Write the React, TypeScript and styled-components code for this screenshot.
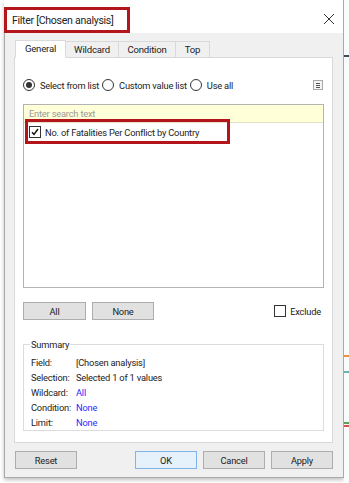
import React from "react";
import styled, { createGlobalStyle } from "styled-components";

const Global = createGlobalStyle`
  html, body { margin: 0; padding: 0; background: #ffffff; }
  body { font-family: Roboto, "Open Sans", sans-serif; color: #222; letter-spacing: -0.2px; }
  * { box-sizing: border-box; }
`;

const Page = styled.div`
  width: 349px;
  height: 483px;
  display: flex;
  overflow: hidden;
  background: #ffffff;
`;

const Dialog = styled.div`
  margin-left: 4px;
  width: 340px;
  height: 478px;
  display: flex;
  flex-direction: column;
  border: 1px solid #a9a9a9;
  border-top: none;
  background: #f0f0f0;
  box-shadow: 0 2px 4px rgba(0, 0, 0, 0.25);
`;

const TitleBar = styled.div`
  height: 33px;
  background: #ffffff;
  display: flex;
  align-items: flex-start;
  justify-content: space-between;
  padding-top: 7px;
  margin-left: -1px;
`;

const TitleBox = styled.div`
  width: 126px;
  height: 26px;
  border: 3px solid #b3151a;
  display: flex;
  align-items: center;
  padding-left: 5px;
  font-size: 10.6px;
  letter-spacing: -0.3px;
  color: #222;
  white-space: nowrap;
`;

const CloseBtn = styled.div`
  width: 14px;
  height: 14px;
  margin: 5px 7px 0 0;
  display: flex;
  align-items: center;
  justify-content: center;
`;

const Body = styled.div`
  flex: 1;
  display: flex;
  flex-direction: column;
  padding: 7px 10px 0 9px;
`;

const TabRow = styled.div`
  display: flex;
  align-items: flex-end;
  height: 17px;
  padding-left: 1px;
  position: relative;
  z-index: 1;
`;

const Tab = styled.div<{ $active?: boolean; $w: number }>`
  width: ${(p) => p.$w}px;
  height: ${(p) => (p.$active ? 18 : 16)}px;
  display: flex;
  align-items: center;
  justify-content: center;
  font-size: 9.6px;
  color: #222;
  background: ${(p) => (p.$active ? "#ffffff" : "#f0f0f0")};
  border: 1px solid #d9d9d9;
  border-bottom: ${(p) => (p.$active ? "1px solid #ffffff" : "none")};
  margin-left: ${(p) => (p.$active ? 0 : -1)}px;
  margin-bottom: ${(p) => (p.$active ? -1 : 0)}px;
  padding-bottom: ${(p) => (p.$active ? 1 : 0)}px;
`;

const Panel = styled.div`
  height: 386px;
  background: #ffffff;
  border: 1px solid #d9d9d9;
  padding: 0 8px 0 8px;
  display: flex;
  flex-direction: column;
`;

const RadioRow = styled.div`
  height: 18px;
  margin-top: 18px;
  display: flex;
  align-items: center;
  font-size: 9.3px;
  color: #222;
`;

const RadioItem = styled.label`
  display: flex;
  align-items: center;
  gap: 5px;
  margin-right: 3px;
`;

const Radio = styled.span<{ $on?: boolean }>`
  width: 12px;
  height: 12px;
  border-radius: 50%;
  border: 1px solid #333;
  background: #fff;
  display: flex;
  align-items: center;
  justify-content: center;
  &::after {
    content: "";
    width: 6px;
    height: 6px;
    border-radius: 50%;
    background: ${(p) => (p.$on ? "#333" : "transparent")};
  }
`;

const Spacer = styled.div`
  flex: 1;
`;

const MenuIcon = styled.div`
  width: 10px;
  height: 10px;
  border: 1px solid #a8a8a8;
  background: #f4f4f4;
  display: flex;
  flex-direction: column;
  justify-content: center;
  gap: 1px;
  padding: 0 2px;
  margin-right: 1px;
  & > span {
    height: 1px;
    background: #555;
  }
`;

const ListBox = styled.div`
  margin-top: 10px;
  height: 184px;
  border: 1px solid #b4b4b4;
  display: flex;
  flex-direction: column;
`;

const Search = styled.div`
  height: 18px;
  background: #ffffd8;
  border-bottom: 1px solid #e2e2c8;
  display: flex;
  align-items: center;
  padding-left: 5px;
  font-size: 9.3px;
  color: #9a9a9a;
`;

const ItemRow = styled.div`
  height: 18px;
  display: flex;
  align-items: center;
  padding-left: 5px;
  font-size: 9.3px;
  color: #222;
  position: relative;
`;

const Highlight = styled.div`
  position: absolute;
  left: 1px;
  top: -4px;
  width: 205px;
  height: 25px;
  border: 3px solid #b3151a;
`;

const Check = styled.span`
  width: 12px;
  height: 12px;
  border: 1px solid #333;
  background: #fff;
  display: inline-flex;
  align-items: center;
  justify-content: center;
  margin-right: 4px;
`;

const BtnRow = styled.div`
  margin-top: 14px;
  height: 18px;
  display: flex;
  align-items: center;
  gap: 6px;
`;

const Button = styled.div<{ $w: number; $primary?: boolean }>`
  width: ${(p) => p.$w}px;
  height: 18px;
  display: flex;
  align-items: center;
  justify-content: center;
  font-size: 9.3px;
  color: #222;
  background: ${(p) => (p.$primary ? "#e5f1fb" : "#e1e1e1")};
  border: 1px solid ${(p) => (p.$primary ? "#7eb4ea" : "#adadad")};
`;

const CheckLabel = styled.label`
  display: flex;
  align-items: center;
  gap: 4px;
  font-size: 9.3px;
  color: #222;
  margin-right: 3px;
`;

const EmptyBox = styled.span`
  width: 12px;
  height: 12px;
  border: 1px solid #333;
  background: #fff;
`;

const Fieldset = styled.fieldset`
  margin: 19px 0 0 0;
  padding: 5px 7px 4px 7px;
  border: 1px solid #dcdcdc;
  height: 92px;
  display: flex;
  flex-direction: column;
`;

const Legend = styled.legend`
  font-size: 9.3px;
  color: #222;
  padding: 0 1px;
  margin-left: -1px;
`;

const SummaryGrid = styled.div`
  display: grid;
  grid-template-columns: 45px 1fr;
  row-gap: 0;
  grid-auto-rows: 15px;
  font-size: 9.3px;
  align-items: center;
`;

const Key = styled.span`
  color: #222;
`;

const Val = styled.span<{ $link?: boolean }>`
  color: ${(p) => (p.$link ? "#2a2aff" : "#222")};
`;

const Footer = styled.div`
  height: 34px;
  display: flex;
  align-items: center;
  gap: 6px;
  margin-left: 1px;
`;

const Side = styled.div`
  flex: 1;
  display: flex;
  flex-direction: column;
  background: #fbfbfb;
`;

const SideMark = styled.div<{ $c: string; $t: number }>`
  height: 2px;
  margin-top: ${(p) => p.$t}px;
  background: ${(p) => p.$c};
`;

export default function App() {
  return (
    <Page>
      <Global />
      <Dialog>
        <TitleBar>
          <TitleBox>Filter [Chosen analysis]</TitleBox>
          <CloseBtn>
            <svg width="12" height="12" viewBox="0 0 12 12">
              <path d="M1 1L11 11M11 1L1 11" stroke="#333" strokeWidth="1" />
            </svg>
          </CloseBtn>
        </TitleBar>
        <Body>
          <TabRow>
            <Tab $active $w={51}>General</Tab>
            <Tab $w={54}>Wildcard</Tab>
            <Tab $w={58}>Condition</Tab>
            <Tab $w={35}>Top</Tab>
          </TabRow>
          <Panel>
            <RadioRow>
              <RadioItem>
                <Radio $on />
                Select from list
              </RadioItem>
              <RadioItem>
                <Radio />
                Custom value list
              </RadioItem>
              <RadioItem>
                <Radio />
                Use all
              </RadioItem>
              <Spacer />
              <MenuIcon>
                <span />
                <span />
                <span />
              </MenuIcon>
            </RadioRow>
            <ListBox>
              <Search>Enter search text</Search>
              <ItemRow>
                <Highlight />
                <Check>
                  <svg width="10" height="10" viewBox="0 0 10 10">
                    <path d="M2 5.2L4 7.5L8 2" stroke="#111" strokeWidth="1.4" fill="none" />
                  </svg>
                </Check>
                No. of Fatalities Per Conflict by Country
              </ItemRow>
            </ListBox>
            <BtnRow>
              <Button $w={63}>All</Button>
              <Button $w={62}>None</Button>
              <Spacer />
              <CheckLabel>
                <EmptyBox />
                Exclude
              </CheckLabel>
            </BtnRow>
            <Fieldset>
              <Legend>Summary</Legend>
              <SummaryGrid>
                <Key>Field:</Key>
                <Val>[Chosen analysis]</Val>
                <Key>Selection:</Key>
                <Val>Selected 1 of 1 values</Val>
                <Key>Wildcard:</Key>
                <Val $link>All</Val>
                <Key>Condition:</Key>
                <Val $link>None</Val>
                <Key>Limit:</Key>
                <Val $link>None</Val>
              </SummaryGrid>
            </Fieldset>
          </Panel>
          <Footer>
            <Button $w={62}>Reset</Button>
            <Spacer />
            <Button $w={62} $primary>OK</Button>
            <Button $w={62}>Cancel</Button>
            <Button $w={62}>Apply</Button>
          </Footer>
        </Body>
      </Dialog>
      <Side>
        <SideMark $c="#3d4a5c" $t={55} />
        <SideMark $c="#e8923a" $t={298} />
        <SideMark $c="#6fb3b0" $t={14} />
        <SideMark $c="#5aa05a" $t={49} />
        <SideMark $c="#d9534f" $t={1} />
      </Side>
    </Page>
  );
}
